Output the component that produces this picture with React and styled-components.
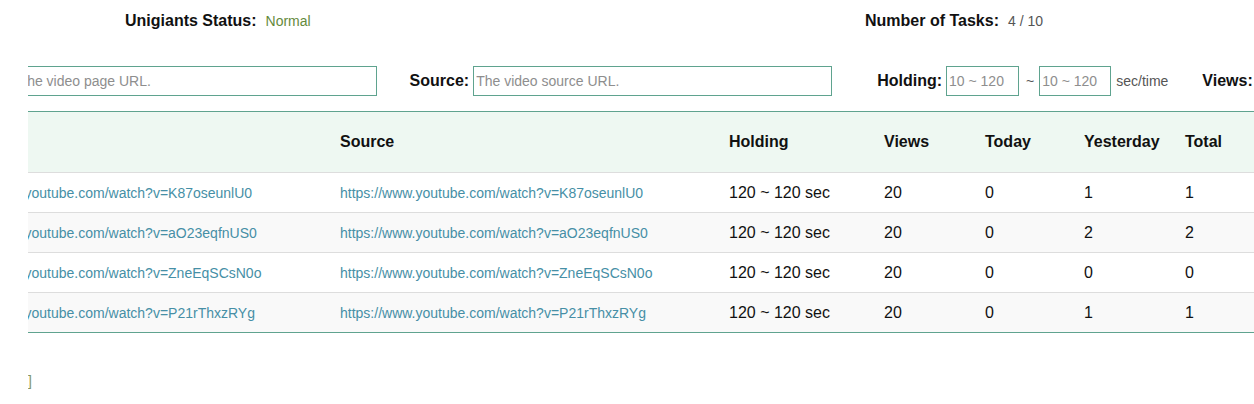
import React from "react";
import styled, { createGlobalStyle } from "styled-components";

const GlobalStyle = createGlobalStyle`
  html, body {
    margin: 0;
    padding: 0;
    background: #ffffff;
    font-family: "Liberation Sans", Arial, sans-serif;
    color: #111111;
  }
`;

const Page = styled.div`
  padding-left: 28px;
  width: 1226px;
  height: 404px;
`;

const Viewport = styled.div`
  overflow: hidden;
  width: 100%;
  height: 100%;
`;

const Content = styled.div`
  margin-left: -87px;
  width: 1400px;
`;

const StatusBar = styled.div`
  display: grid;
  grid-template-columns: 740px auto;
  align-items: center;
  height: 40px;
  padding: 1px 0 0 184px;
`;

const StatusItem = styled.div`
  display: flex;
  align-items: baseline;
  gap: 9px;
`;

const StatusLabel = styled.span`
  font-size: 16px;
  font-weight: bold;
  color: #111;
`;

const StatusValue = styled.span`
  font-size: 14px;
  color: ${(p) => p.$color || "#555"};
`;

const FilterBar = styled.div`
  display: flex;
  align-items: center;
  margin-top: 25px;
  padding-left: 27px;
  height: 30px;
`;

const Field = styled.div`
  display: flex;
  align-items: center;
  gap: 4px;
  margin-right: ${(p) => p.$after || 0}px;
`;

const Label = styled.label`
  font-size: 16px;
  font-weight: bold;
  color: #111;
`;

const Input = styled.input`
  box-sizing: border-box;
  width: ${(p) => p.$w}px;
  height: 30px;
  border: 1px solid #5fa38f;
  padding: 0 2px;
  font-family: "Liberation Sans", Arial, sans-serif;
  font-size: 14px;
  color: #333;
  outline: none;

  &::placeholder {
    color: #8e8e8e;
  }
`;

const Tilde = styled.span`
  font-size: 14px;
  color: #555;
  margin: 0 1px 0 3px;
`;

const Unit = styled.span`
  font-size: 14px;
  color: #555;
  margin-left: 1px;
`;

const Table = styled.div`
  margin-top: 15px;
  border-top: 1px solid #5fa38f;
  border-bottom: 1px solid #5fa38f;
`;

const cols = "391px 389px 155px 101px 99px 101px 164px";

const HeadRow = styled.div`
  display: grid;
  grid-template-columns: ${cols};
  align-items: center;
  height: 60px;
  background: #eef8f2;
`;

const Row = styled.div`
  display: grid;
  grid-template-columns: ${cols};
  align-items: center;
  height: 39px;
  border-top: 1px solid #dddddd;
  background: ${(p) => (p.$alt ? "#f9f9f9" : "#ffffff")};
`;

const Th = styled.div`
  padding-left: 8px;
  font-size: 16px;
  font-weight: bold;
  color: #111;
`;

const Td = styled.div`
  padding-left: 8px;
  font-size: 16px;
  color: #111;
  white-space: nowrap;
`;

const LinkCell = styled.a`
  padding-left: 8px;
  font-size: 14px;
  color: #468fa6;
  text-decoration: none;
  white-space: nowrap;
`;

const Footer = styled.div`
  margin-top: 40px;
  padding-left: 52px;
  font-size: 14px;
  color: #7f9566;
`;

const tasks = [
  { id: "K87oseunlU0", yesterday: 1, total: 1 },
  { id: "aO23eqfnUS0", yesterday: 2, total: 2 },
  { id: "ZneEqSCsN0o", yesterday: 0, total: 0 },
  { id: "P21rThxzRYg", yesterday: 1, total: 1 },
];

const App = () => {
  return (
    <>
      <GlobalStyle />
      <Page>
        <Viewport>
          <Content>
            <StatusBar>
              <StatusItem>
                <StatusLabel>Unigiants Status:</StatusLabel>
                <StatusValue $color="#658a3c">Normal</StatusValue>
              </StatusItem>
              <StatusItem>
                <StatusLabel>Number of Tasks:</StatusLabel>
                <StatusValue>4 / 10</StatusValue>
              </StatusItem>
            </StatusBar>

            <FilterBar>
              <Field $after={33}>
                <Label>Page:</Label>
                <Input $w={361} placeholder="The video page URL." />
              </Field>
              <Field $after={45}>
                <Label>Source:</Label>
                <Input $w={359} placeholder="The video source URL." />
              </Field>
              <Field $after={34}>
                <Label>Holding:</Label>
                <Input $w={73} placeholder="10 ~ 120" />
                <Tilde>~</Tilde>
                <Input $w={72} placeholder="10 ~ 120" />
                <Unit>sec/time</Unit>
              </Field>
              <Field>
                <Label>Views:</Label>
                <Input $w={73} placeholder="1 ~ 100" />
              </Field>
            </FilterBar>

            <Table>
              <HeadRow>
                <Th>URL</Th>
                <Th>Source</Th>
                <Th>Holding</Th>
                <Th>Views</Th>
                <Th>Today</Th>
                <Th>Yesterday</Th>
                <Th>Total</Th>
              </HeadRow>
              {tasks.map((t, i) => (
                <Row key={t.id} $alt={i % 2 === 1}>
                  <LinkCell href="#">https://www.youtube.com/watch?v={t.id}</LinkCell>
                  <LinkCell href="#">https://www.youtube.com/watch?v={t.id}</LinkCell>
                  <Td>120 ~ 120 sec</Td>
                  <Td>20</Td>
                  <Td>0</Td>
                  <Td>{t.yesterday}</Td>
                  <Td>{t.total}</Td>
                </Row>
              ))}
            </Table>

            <Footer>[Back]</Footer>
          </Content>
        </Viewport>
      </Page>
    </>
  );
};

export default App;
